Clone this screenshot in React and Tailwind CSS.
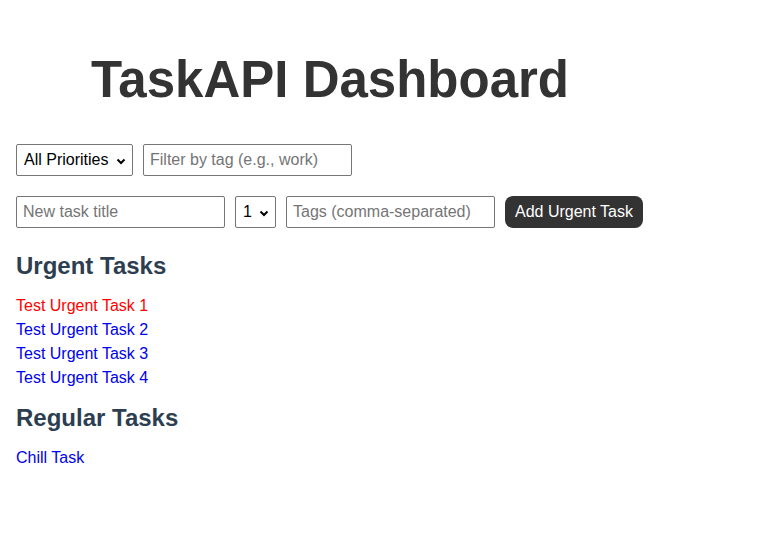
import { useState } from 'react';

const urgentTasks = [
  { title: 'Test Urgent Task 1', overdue: true },
  { title: 'Test Urgent Task 2' },
  { title: 'Test Urgent Task 3' },
  { title: 'Test Urgent Task 4' },
];

const regularTasks = [{ title: 'Chill Task' }];

function Chevron() {
  return (
    <svg className="w-[10px] h-[7px] pointer-events-none" viewBox="0 0 10 7">
      <path d="M1.5 1.5 L5 5 L8.5 1.5" fill="none" stroke="#000" strokeWidth="2" />
    </svg>
  );
}

function Select({ value, onChange, options, className }) {
  return (
    <div className={`relative h-8 border border-[#767676] rounded-[2px] bg-white flex items-center ${className}`}>
      <select
        value={value}
        onChange={(e) => onChange(e.target.value)}
        className="appearance-none h-full w-full bg-transparent pl-[7px] pr-[16px] text-base text-black outline-none"
      >
        {options.map((o) => (
          <option key={o} value={o}>
            {o}
          </option>
        ))}
      </select>
      <span className="absolute right-[6px] top-[13px]">
        <Chevron />
      </span>
    </div>
  );
}

function TaskList({ tasks, className }) {
  return (
    <ul className={className}>
      {tasks.map((t) => (
        <li key={t.title} className="leading-6">
          <a href="#" className={t.overdue ? 'text-[#ff0000]' : 'text-[#0000ee]'}>
            {t.title}
          </a>
        </li>
      ))}
    </ul>
  );
}

export default function App() {
  const [priority, setPriority] = useState('All Priorities');
  const [level, setLevel] = useState('1');

  return (
    <div className="min-h-[547px] bg-white p-4 font-['Liberation_Sans',Arial,sans-serif] text-base">
      <h1 className="mt-[35px] ml-[75px] text-[51px] leading-[58.6px] font-bold text-[#333333]">
        TaskAPI Dashboard
      </h1>

      <div className="mt-[34px] flex gap-[10px]">
        <Select
          value={priority}
          onChange={setPriority}
          options={['All Priorities', 'Urgent', 'Regular']}
          className="w-[117px]"
        />
        <input
          placeholder="Filter by tag (e.g., work)"
          className="w-[209px] h-8 border border-[#767676] rounded-[2px] px-[6px] text-base placeholder:text-[#757575] outline-none"
        />
      </div>

      <div className="mt-[20px] flex gap-[10px]">
        <input
          placeholder="New task title"
          className="w-[209px] h-8 border border-[#767676] rounded-[2px] px-[6px] text-base placeholder:text-[#757575] outline-none"
        />
        <Select
          value={level}
          onChange={setLevel}
          options={['1', '2', '3', '4', '5']}
          className="w-[41px]"
        />
        <input
          placeholder="Tags (comma-separated)"
          className="w-[209px] h-8 border border-[#767676] rounded-[2px] px-[6px] text-base placeholder:text-[#757575] outline-none"
        />
        <button className="h-8 px-[10px] rounded-lg bg-[#333333] text-white text-base">
          Add Urgent Task
        </button>
      </div>

      <h2 className="mt-[24px] text-2xl leading-[27.6px] font-bold text-[#2c3e50]">Urgent Tasks</h2>
      <TaskList tasks={urgentTasks} className="mt-[15px]" />

      <h2 className="mt-[14px] text-2xl leading-[27.6px] font-bold text-[#2c3e50]">Regular Tasks</h2>
      <TaskList tasks={regularTasks} className="mt-[14px]" />
    </div>
  );
}
